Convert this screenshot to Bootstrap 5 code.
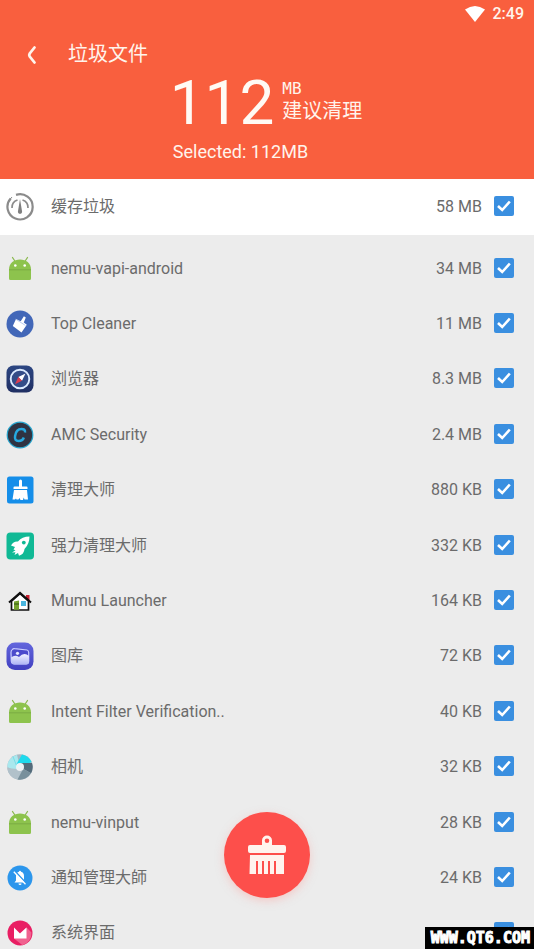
<!DOCTYPE html>
<html lang="zh-CN">
<head>
<meta charset="utf-8">
<meta name="viewport" content="width=device-width, initial-scale=1">
<title>垃圾文件</title>
<link href="https://cdn.jsdelivr.net/npm/bootstrap@5.3.0/dist/css/bootstrap.min.css" rel="stylesheet">
<style>
  body { font-family: Roboto, "Noto Sans CJK SC", sans-serif; background: #ececec; color: #6b6b6b; }
  .hero { background: #f95f3e; color: #fff4ec; padding-bottom: 15px; }
  .status-bar { height: 28px; font-weight: 500; padding-right: 10px; }
  .title-bar { height: 52px; }
  .back-btn { width: 64px; height: 52px; color: #fff4ec; }
  .page-title { font-size: 20px; line-height: 28px; }
  .total { height: 46px; padding-right: 2px; }
  .total-number { font-size: 62px; line-height: 46px; font-weight: 400; color: #fffaf4; }
  .total-unit { font: 16px/18px "DejaVu Sans Mono", monospace; }
  .total-hint { font-size: 20px; line-height: 26px; }
  .selected-line { font-size: 18px; line-height: 24px; padding-right: 53px; margin-top: 14px; }
  .item-row { font-size: 16px; line-height: 24px; }
  .item-row svg { width: 28px; height: 28px; flex: none; }
  .summary-row { height: 56px; background: #fff; }
  .file-scroll { scrollbar-width: none; }
  .file-scroll::-webkit-scrollbar { display: none; }
  .file-list { min-height: 726px; grid-auto-rows: 1fr; padding-top: 6px; }
  .form-check-input.tick { width: 20px; height: 20px; margin: 0 0 2px; border: 0; border-radius: 2px; flex: none; }
  .form-check-input.tick:checked { background-color: #3a8fe0;
    background-image: url("data:image/svg+xml,%3csvg xmlns='http://www.w3.org/2000/svg' viewBox='0 0 20 20'%3e%3cpath fill='none' stroke='%23fff' stroke-width='2.6' d='M4 10l4.200 4L15.800 5.500'/%3e%3c/svg%3e"); }
  .item-left { padding-left: 6px; gap: 17px; }
  .item-right { padding-right: 20px; gap: 12px; }
  .clean-btn { width: 86px; height: 86px; background: #fd4f4b; bottom: 51px; box-shadow: 0 3px 8px #f9a9a580; }
  .clean-btn:hover { background: #ee4541; }
  .site-tag { background: #000; color: #fff; font: bold 15px/22px "DejaVu Sans Mono", monospace; padding: 0 4px 0 6px; -webkit-text-stroke: 1px #fff; }
</style>
<script src="https://cdn.jsdelivr.net/npm/bootstrap@5.3.0/dist/js/bootstrap.bundle.min.js" defer></script>
</head>
<body>
<svg class="d-none" aria-hidden="true">
  <symbol id="android" viewBox="0 0 28 28">
    <path d="M6.500 2.500l3 4.500M21.500 2.500l-3 4.500" stroke="#8cba50" stroke-width="1.300" stroke-linecap="round"/>
    <path d="M3 14.500C3 8 8 4.500 14 4.500S25 8 25 14.500z" fill="#8dc34d"/>
    <path d="M3 15h22v8.500a1.500 1.500 0 0 1-1.500 1.500h-19A1.500 1.500 0 0 1 3 23.500z" fill="#8dc34d"/>
    <path d="M3 14h22v1.500H3z" fill="#80b346"/>
    <circle cx="9.300" cy="10.500" r="1.300" fill="#fff"/><circle cx="18.700" cy="10.500" r="1.300" fill="#fff"/>
  </symbol>
</svg>
<div class="vh-100 d-flex flex-column position-relative overflow-hidden">
  <header class="hero flex-shrink-0">
    <div class="status-bar d-flex align-items-center justify-content-end gap-2">
      <svg width="20" height="16" viewBox="0 0 20 16" aria-label="Wi-Fi"><path d="M0 3.500Q10-3.500 20 3.500L10 16z" fill="#fff"/></svg>
      <span>2:49</span>
    </div>
    <div class="title-bar d-flex align-items-center">
      <button type="button" class="back-btn btn border-0 p-0 me-1" aria-label="返回">
        <svg width="10" height="20" viewBox="0 0 10 20" fill="none" stroke="currentColor" stroke-width="2.800" stroke-linecap="round" stroke-linejoin="round"><path d="M7.500 2.500L2.700 8.500Q1.800 10 2.700 11.500L7.500 17.500"/></svg>
      </button>
      <h1 class="page-title fw-normal m-0">垃圾文件</h1>
    </div>
    <div class="total d-flex justify-content-center">
      <span class="total-number">112</span>
      <div class="ms-2">
        <div class="total-unit">MB</div>
        <div class="total-hint">建议清理</div>
      </div>
    </div>
    <p class="selected-line text-center mb-0">Selected: 112MB</p>
  </header>

  <div class="item-row summary-row flex-shrink-0 d-flex align-items-center justify-content-between">
    <label class="item-left d-flex align-items-center" for="c0">
      <svg viewBox="0 0 28 28" fill="none" stroke="#8b8b8b"><path d="M10 1.900A12.600 12.600 0 1 1 4.700 5.400" stroke-width="2.200"/><path d="M3 7.500L6 4" stroke-width="1"/><path d="M6 15A8 8 0 0 1 11.500 7M16.500 7A8 8 0 0 1 22 15" stroke-width="1.700"/><path d="M14 6l2 12a2.100 2.100 0 1 1-4 0z" fill="#7f7f7f" stroke="none"/></svg>
      缓存垃圾</label>
    <div class="item-right d-flex align-items-center"><span>58 MB</span><input class="form-check-input tick" type="checkbox" id="c0" checked></div>
  </div>

  <main class="file-scroll flex-grow-1 overflow-auto">
    <ul class="file-list list-unstyled d-grid m-0">
      <li class="item-row d-flex align-items-center justify-content-between">
        <label class="item-left d-flex align-items-center" for="c1"><svg><use href="#android"/></svg>nemu-vapi-android</label>
        <div class="item-right d-flex align-items-center"><span>34 MB</span><input class="form-check-input tick" type="checkbox" id="c1" checked></div>
      </li>
      <li class="item-row d-flex align-items-center justify-content-between">
        <label class="item-left d-flex align-items-center" for="c2"><svg viewBox="0 0 28 28"><circle cx="14" cy="14" r="13.500" fill="#4267b8"/><path d="M10 9l3 1.500 1.700.7 3.200-5 1.900 1.200-2 5 3 2.300-5.300 7.800L6.800 16z" fill="#fff"/><path d="M9.800 9.200l9.700 6.300" stroke="#a9bfeb" stroke-width=".8"/></svg>Top Cleaner</label>
        <div class="item-right d-flex align-items-center"><span>11 MB</span><input class="form-check-input tick" type="checkbox" id="c2" checked></div>
      </li>
      <li class="item-row d-flex align-items-center justify-content-between">
        <label class="item-left d-flex align-items-center" for="c3"><svg viewBox="0 0 28 28"><defs><linearGradient id="gb" x2="0" y2="1"><stop stop-color="#2c4682"/><stop offset="1" stop-color="#202f63"/></linearGradient></defs><rect x=".5" y=".5" width="27" height="27" rx="7" fill="url(#gb)"/><circle cx="14" cy="14" r="9.300" fill="#334c88" stroke="#dcebff" stroke-width="1.900"/><path d="M19.500 8.500l-3.500 7.300-3.700-3.700z" fill="#fff"/><path d="M9 19.300l3.300-7.200 3.700 3.700z" fill="#dc3c50"/></svg>浏览器</label>
        <div class="item-right d-flex align-items-center"><span>8.3 MB</span><input class="form-check-input tick" type="checkbox" id="c3" checked></div>
      </li>
      <li class="item-row d-flex align-items-center justify-content-between">
        <label class="item-left d-flex align-items-center" for="c4"><svg viewBox="0 0 28 28"><circle cx="14" cy="14" r="12.800" fill="#2f3342" stroke="#27a5ce" stroke-width="1.200"/><path d="M19 11.500C19.500 8.500 17.500 8 15.500 8C11.500 8 9.800 10.500 9.100 15C8.500 18.500 9.800 20 12.500 20C15.500 20 17 19 17.800 16.500" fill="none" stroke="#26a9e0" stroke-width="2.500"/></svg>AMC Security</label>
        <div class="item-right d-flex align-items-center"><span>2.4 MB</span><input class="form-check-input tick" type="checkbox" id="c4" checked></div>
      </li>
      <li class="item-row d-flex align-items-center justify-content-between">
        <label class="item-left d-flex align-items-center" for="c5"><svg viewBox="0 0 28 28"><rect x="1" y=".5" width="26.500" height="27" rx="2.500" fill="#158ee9"/><path d="M13 5a1.500 1.500 0 0 1 3 0v5.500h4.500a1 1 0 0 1 1 1V13h-14v-1.500a1 1 0 0 1 1-1H13z" fill="#fff"/><path d="M8 14h13l1 9.500h-3.500l-.8-2-.7 2.500h-2.500l-1-2-1 1.500h-2l-.5-1-1 1H6.500z" fill="#fff"/></svg>清理大师</label>
        <div class="item-right d-flex align-items-center"><span>880 KB</span><input class="form-check-input tick" type="checkbox" id="c5" checked></div>
      </li>
      <li class="item-row d-flex align-items-center justify-content-between">
        <label class="item-left d-flex align-items-center" for="c6"><svg viewBox="0 0 28 28"><rect x=".5" y=".5" width="27.500" height="27" rx="4" fill="#10b995"/><path d="M23.500 4.500Q16 4.500 12 9.500Q7.500 9 5 13.500L9 15l-1.500 2.500 2 .7-3.500 2.300 3.500-.2-1 2.700 3.500-2 1 2.700Q18 22.500 18.500 17Q23.500 12 23.500 4.500z" fill="#fff"/><circle cx="17.800" cy="10.600" r="1.900" fill="#10b995"/></svg>强力清理大师</label>
        <div class="item-right d-flex align-items-center"><span>332 KB</span><input class="form-check-input tick" type="checkbox" id="c6" checked></div>
      </li>
      <li class="item-row d-flex align-items-center justify-content-between">
        <label class="item-left d-flex align-items-center" for="c7"><svg viewBox="0 0 28 28"><path d="M20 8h3.500v5H20z" fill="#c82031"/><path d="M5.500 23V14L14 6.500l8.500 7.500v9z" fill="#fff" stroke="#111" stroke-width="1.700"/><path d="M3 15.500L14 5.800l11 9.700" fill="none" stroke="#111" stroke-width="2"/><path d="M8 14.500l5-1v9.200H8z" fill="#75a32d"/><path d="M8 17h5" stroke="#315217"/><path d="M15 14h5v5h-5z" fill="#49b6de"/></svg>Mumu Launcher</label>
        <div class="item-right d-flex align-items-center"><span>164 KB</span><input class="form-check-input tick" type="checkbox" id="c7" checked></div>
      </li>
      <li class="item-row d-flex align-items-center justify-content-between">
        <label class="item-left d-flex align-items-center" for="c8"><svg viewBox="0 0 28 28"><defs><linearGradient id="gg" x2="0" y2="1"><stop stop-color="#6366dd"/><stop offset="1" stop-color="#4140c0"/></linearGradient><linearGradient id="gc" x2="0" y2="1"><stop stop-color="#f2f3ff"/><stop offset="1" stop-color="#aeb4f5"/></linearGradient></defs><rect x=".5" y=".5" width="27" height="27.500" rx="8.500" fill="url(#gg)"/><path d="M6.500 7.500Q7 6.500 8.500 6.700L21 8Q22.500 8.200 22.700 10.500V19Q22.700 22 20 22H8.500Q5.500 22 5.300 19L5 10.500Q5 8 6.500 7.500z" fill="#4b4acc" stroke="#c9ccff" stroke-width="1.200"/><path d="M5 15.500Q9 12.500 13 15Q18 9.500 23 14v5q0 3.500-3 3.500H8.500q-3 0-3.200-3.500z" fill="url(#gc)"/><circle cx="11.500" cy="11.300" r="1.600" fill="#e4e6ff"/></svg>图库</label>
        <div class="item-right d-flex align-items-center"><span>72 KB</span><input class="form-check-input tick" type="checkbox" id="c8" checked></div>
      </li>
      <li class="item-row d-flex align-items-center justify-content-between">
        <label class="item-left d-flex align-items-center" for="c9"><svg><use href="#android"/></svg>Intent Filter Verification..</label>
        <div class="item-right d-flex align-items-center"><span>40 KB</span><input class="form-check-input tick" type="checkbox" id="c9" checked></div>
      </li>
      <li class="item-row d-flex align-items-center justify-content-between">
        <label class="item-left d-flex align-items-center" for="c10"><svg viewBox="0 0 28 28"><circle cx="14" cy="14" r="12.700" fill="#a7b9c4"/><path d="M14 14L11 1.700A12.700 12.700 0 0 0 1.300 14L9 18z" fill="#a9e8ee"/><path d="M14 14l-4-2 6-10.500A12.700 12.700 0 0 1 25.600 9z" fill="#1fd9ec"/><path d="M14 10h12a12.700 12.700 0 0 1-1 10.300L14 14z" fill="#546b7a"/><path d="M14 14l11 6.300A12.700 12.700 0 0 1 11.500 26.400z" fill="#78909c"/><path d="M11.500 26.400A12.700 12.700 0 0 1 1.300 15L11 16l5 2z" fill="#b1c1ca"/><path d="M7 3.500L11 14" stroke="#79dce6"/><circle cx="14" cy="14" r="4" fill="#eef2f5"/></svg>相机</label>
        <div class="item-right d-flex align-items-center"><span>32 KB</span><input class="form-check-input tick" type="checkbox" id="c10" checked></div>
      </li>
      <li class="item-row d-flex align-items-center justify-content-between">
        <label class="item-left d-flex align-items-center" for="c11"><svg><use href="#android"/></svg>nemu-vinput</label>
        <div class="item-right d-flex align-items-center"><span>28 KB</span><input class="form-check-input tick" type="checkbox" id="c11" checked></div>
      </li>
      <li class="item-row d-flex align-items-center justify-content-between">
        <label class="item-left d-flex align-items-center" for="c12"><svg viewBox="0 0 28 28"><circle cx="14" cy="14" r="12.500" fill="#2c96ec"/><path d="M8.500 18.500l1.500-2V12q0-3.500 3-4.300a1 1 0 0 1 2 0q3 .8 3 4.300v4.500l1.500 2z" fill="#fff"/><path d="M12.500 19.500h3a1.500 1.500 0 0 1-3 0z" fill="#fff"/><path d="M8.800 7L20.500 19.500" stroke="#2c96ec" stroke-width="1.600"/><path d="M7.800 7.700L19.500 20.200" stroke="#fff" stroke-width="1.300"/></svg>通知管理大師</label>
        <div class="item-right d-flex align-items-center"><span>24 KB</span><input class="form-check-input tick" type="checkbox" id="c12" checked></div>
      </li>
      <li class="item-row d-flex align-items-center justify-content-between">
        <label class="item-left d-flex align-items-center" for="c13"><svg viewBox="0 0 28 28"><circle cx="14" cy="14" r="12.500" fill="#e91e63"/><path d="M20.500 8.500l5 5a12.500 12.500 0 0 1-9 12.700L8 19.500z" fill="#f0628f"/><path d="M8 8.500l6 6 6.500-6v11H8z" fill="#fff"/></svg>系统界面</label>
        <div class="item-right d-flex align-items-center"><input class="form-check-input tick" type="checkbox" id="c13" checked></div>
      </li>
    </ul>
  </main>

  <button type="button" class="clean-btn btn border-0 rounded-circle p-0 position-absolute start-50 translate-middle-x" aria-label="清理">
    <svg width="40" height="40" viewBox="0 0 40 40" fill="#fff4ee"><path fill-rule="evenodd" d="M15 10V5.500a5 5 0 0 1 10 0V10h12q2 0 2 2v4q0 2-2 2H3q-2 0-2-2v-4q0-2 2-2zM20 3.500a2.300 2.300 0 1 0 0 4.600 2.300 2.300 0 0 0 0-4.600z"/><path d="M3 20h34v19h-8V26h-2v13h-4V26h-2v13h-4V26h-2v13h-4V26h-2v13H2.500z"/></svg>
  </button>
  <div class="site-tag position-absolute bottom-0 end-0">WWW.QT6.COM</div>
</div>
</body>
</html>
